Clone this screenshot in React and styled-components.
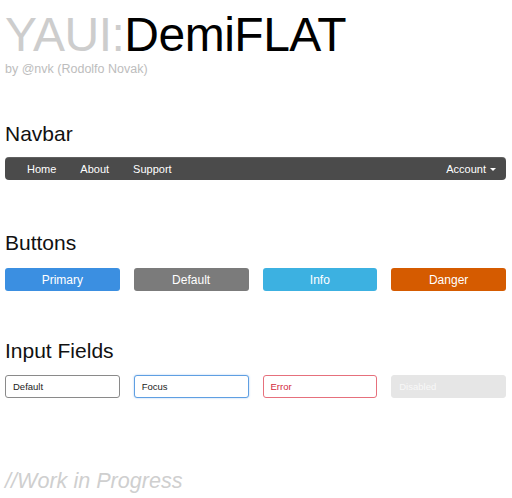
import React from "react";
import styled, { createGlobalStyle } from "styled-components";

const GlobalStyle = createGlobalStyle`
  body {
    margin: 0;
    background: #ffffff;
    font-family: "Liberation Sans", Arial, Helvetica, sans-serif;
  }
`;

const Page = styled.div`
  padding: 11px 6px 0 5px;
  display: flex;
  flex-direction: column;
`;

const Title = styled.h1`
  margin: 0;
  font-size: 48px;
  line-height: 48px;
  font-weight: normal;
  letter-spacing: -0.5px;
  color: #000;
`;

const Light = styled.span`
  color: #cdcdcd;
`;

const Byline = styled.div`
  margin-top: 3px;
  font-size: 12.5px;
  line-height: 14px;
  color: #bdbdbd;
`;

const Heading = styled.h2`
  margin: ${(p) => p.$top}px 0 0 0;
  font-size: 21px;
  line-height: 26px;
  font-weight: normal;
  color: #111;
`;

const Navbar = styled.nav`
  margin-top: 10px;
  height: 23px;
  box-sizing: border-box;
  background: #4b4b4b;
  border-radius: 4px;
  box-shadow: inset 0 1px 0 rgba(255, 255, 255, 0.12);
  display: flex;
  align-items: center;
  justify-content: space-between;
  padding: 0 10px;
`;

const NavGroup = styled.div`
  display: flex;
  align-items: center;
`;

const NavItem = styled.a`
  color: #fff;
  font-size: 11px;
  padding: 0 ${(p) => (p.$last ? 0 : 12)}px 0 12px;
  display: flex;
  align-items: center;
  gap: 4px;
  text-decoration: none;
`;

const Caret = styled.span`
  width: 0;
  height: 0;
  border-left: 3px solid transparent;
  border-right: 3px solid transparent;
  border-top: 3px solid #fff;
  margin-top: 1px;
`;

const Row = styled.div`
  margin-top: ${(p) => p.$top}px;
  display: grid;
  grid-template-columns: repeat(4, 1fr);
  gap: 14px;
`;

const Button = styled.button`
  height: 23px;
  border: none;
  border-radius: 3px;
  background: ${(p) => p.$bg};
  color: #fff;
  font-family: inherit;
  font-size: 12px;
  padding: 0;
`;

const Field = styled.div`
  height: 23px;
  box-sizing: border-box;
  border-radius: 3px;
  border: 1px solid ${(p) => p.$border};
  background: ${(p) => p.$bg || "#fff"};
  color: ${(p) => p.$color || "#222"};
  box-shadow: ${(p) => p.$glow || "none"};
  font-size: 9.5px;
  display: flex;
  align-items: center;
  padding-left: 7px;
`;

const Footer = styled.div`
  margin-top: 71px;
  font-size: 21.6px;
  line-height: 24px;
  font-style: italic;
  color: #cfcfcf;
`;

export default function App() {
  return (
    <>
      <GlobalStyle />
      <Page>
        <Title>
          <Light>YAUI:</Light>DemiFLAT
        </Title>
        <Byline>by @nvk (Rodolfo Novak)</Byline>

        <Heading $top={45}>Navbar</Heading>
        <Navbar>
          <NavGroup>
            <NavItem>Home</NavItem>
            <NavItem>About</NavItem>
            <NavItem>Support</NavItem>
          </NavGroup>
          <NavGroup>
            <NavItem $last>
              Account <Caret />
            </NavItem>
          </NavGroup>
        </Navbar>

        <Heading $top={50}>Buttons</Heading>
        <Row $top={12}>
          <Button $bg="#3b8fe1">Primary</Button>
          <Button $bg="#7b7b7b">Default</Button>
          <Button $bg="#3cb1e1">Info</Button>
          <Button $bg="#d55b00">Danger</Button>
        </Row>

        <Heading $top={47}>Input Fields</Heading>
        <Row $top={11}>
          <Field $border="#8a8a8a">Default</Field>
          <Field $border="#5f9fe2" $glow="0 0 2px rgba(80,150,230,0.5)">
            Focus
          </Field>
          <Field $border="#e6707c" $color="#d32a3e">
            Error
          </Field>
          <Field $border="#e6e6e6" $bg="#e6e6e6" $color="#f8f8f8">
            Disabled
          </Field>
        </Row>

        <Footer>//Work in Progress</Footer>
      </Page>
    </>
  );
}
